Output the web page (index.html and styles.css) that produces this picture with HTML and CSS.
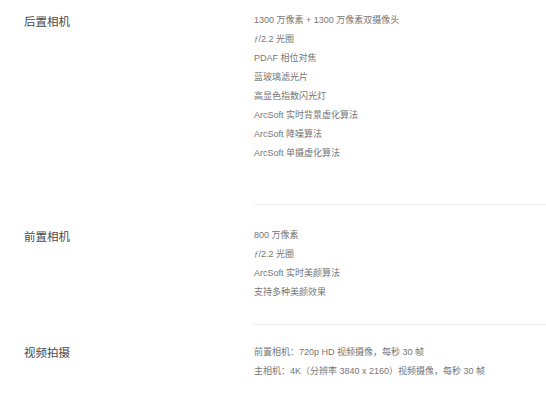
FILE: index.html
```html
<!DOCTYPE html>
<html lang="zh-CN">
<head>
<meta charset="utf-8">
<title>相机参数</title>
<link rel="stylesheet" href="styles.css">
</head>
<body>
<div class="specs">
  <section class="spec spec-rear">
    <h3 class="spec-label">后置相机</h3>
    <ul class="spec-list">
      <li>1300 万像素 + 1300 万像素双摄像头</li>
      <li><span class="fn">ƒ</span>/2.2 光圈</li>
      <li>PDAF 相位对焦</li>
      <li>蓝玻璃滤光片</li>
      <li>高显色指数闪光灯</li>
      <li>ArcSoft 实时背景虚化算法</li>
      <li>ArcSoft 降噪算法</li>
      <li>ArcSoft 单摄虚化算法</li>
    </ul>
  </section>
  <section class="spec spec-front">
    <h3 class="spec-label">前置相机</h3>
    <ul class="spec-list">
      <li>800 万像素</li>
      <li><span class="fn">ƒ</span>/2.2 光圈</li>
      <li>ArcSoft 实时美颜算法</li>
      <li>支持多种美颜效果</li>
    </ul>
  </section>
  <section class="spec spec-video">
    <h3 class="spec-label">视频拍摄</h3>
    <ul class="spec-list">
      <li>前置相机：720p HD 视频摄像，每秒 30 帧</li>
      <li>主相机：4K（分辨率 3840 x 2160）视频摄像，每秒 30 帧</li>
    </ul>
  </section>
</div>
</body>
</html>
```
FILE: styles.css
```css
html, body {
  margin: 0;
  padding: 0;
  background: #ffffff;
}

body {
  font-family: "Liberation Sans", "Noto Sans CJK SC", sans-serif;
  color: #666666;
}

.specs {
  display: flex;
  flex-direction: column;
}

.spec {
  display: grid;
  grid-template-columns: 254px 1fr;
}

.spec-label {
  margin: 0;
  padding-left: 24px;
  font-size: 11.5px;
  font-weight: normal;
  line-height: 22px;
  color: #4a4a4a;
}

.spec-list {
  list-style: none;
  margin: 0;
  padding: 0;
  font-size: 9px;
  line-height: 19px;
  color: #767676;
}

.fn {
  font-family: "Liberation Serif", serif;
  font-style: italic;
}

.spec-rear .spec-label { padding-top: 11px; }
.spec-rear .spec-list {
  padding-top: 11px;
  padding-bottom: 41px;
  border-bottom: 1px solid #f1f1f1;
}

.spec-front .spec-label { padding-top: 21px; }
.spec-front .spec-list {
  padding-top: 21px;
  padding-bottom: 22px;
  border-bottom: 1px solid #ececec;
}

.spec-video .spec-label { padding-top: 17px; }
.spec-video .spec-list {
  padding-top: 18px;
}
```
